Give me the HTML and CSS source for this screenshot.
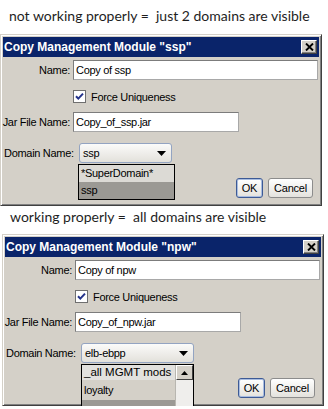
FILE: index.html
```html
<!DOCTYPE html>
<html lang="en">
<head>
    <meta charset="UTF-8">
    <title>Copy Management Module</title>
    <link rel="stylesheet" href="styles.css">
</head>
<body>
    <p class="caption">not working properly =  just 2 domains are visible</p>
    <div class="dialog">
        <div class="titlebar">
            <span class="title">Copy Management Module "ssp"</span>
            <span class="close">
                <svg width="9" height="8" viewBox="0 0 9 8"><path d="M1 0.5 L8 7.5 M8 0.5 L1 7.5" stroke="#000" stroke-width="1.9"/></svg>
            </span>
        </div>
        <div class="dialog-body">
            <div class="row">
                <span class="label">Name:</span>
                <span class="field field-wide">Copy of ssp</span>
            </div>
            <div class="row row-check">
                <span class="checkbox">
                    <svg width="11" height="11" viewBox="0 0 11 11"><path d="M2 5.2 L4.3 7.6 L9 2.6" fill="none" stroke="#23328a" stroke-width="2"/></svg>
                </span>
                <span>Force Uniqueness</span>
            </div>
            <div class="row row-jar">
                <span class="label">Jar File Name:</span>
                <span class="field field-jar">Copy_of_ssp.jar</span>
            </div>
            <div class="row row-domain">
                <span class="domain-label">Domain Name:</span>
                <div class="combo">
                    <span>ssp</span>
                    <svg width="9" height="5" viewBox="0 0 9 5"><polygon points="0,0 9,0 4.5,5" fill="#000"/></svg>
                    <ul class="popup">
                        <li class="item">*SuperDomain*</li>
                        <li class="item item-selected">ssp</li>
                    </ul>
                </div>
            </div>
            <div class="buttons">
                <button class="btn btn-default">OK</button>
                <button class="btn btn-cancel">Cancel</button>
            </div>
        </div>
    </div>

    <p class="caption caption-second">working properly =  all domains are visible</p>
    <div class="dialog dialog-second">
        <div class="titlebar">
            <span class="title">Copy Management Module "npw"</span>
            <span class="close">
                <svg width="9" height="8" viewBox="0 0 9 8"><path d="M1 0.5 L8 7.5 M8 0.5 L1 7.5" stroke="#000" stroke-width="1.9"/></svg>
            </span>
        </div>
        <div class="dialog-body">
            <div class="row">
                <span class="label">Name:</span>
                <span class="field field-wide">Copy of npw</span>
            </div>
            <div class="row row-check">
                <span class="checkbox">
                    <svg width="11" height="11" viewBox="0 0 11 11"><path d="M2 5.2 L4.3 7.6 L9 2.6" fill="none" stroke="#23328a" stroke-width="2"/></svg>
                </span>
                <span>Force Uniqueness</span>
            </div>
            <div class="row row-jar">
                <span class="label">Jar File Name:</span>
                <span class="field field-jar">Copy_of_npw.jar</span>
            </div>
            <div class="row row-domain">
                <span class="domain-label">Domain Name:</span>
                <div class="combo combo-wide">
                    <span>elb-ebpp</span>
                    <svg width="9" height="5" viewBox="0 0 9 5"><polygon points="0,0 9,0 4.5,5" fill="#000"/></svg>
                    <div class="popup popup-scroll">
                        <ul class="popup-list">
                            <li class="item item-big">_all MGMT mods</li>
                            <li class="item item-plain">loyalty</li>
                            <li class="item item-selected">npw</li>
                        </ul>
                        <div class="scrollbar">
                            <span class="scroll-up">
                                <svg width="7" height="4" viewBox="0 0 7 4"><polygon points="0,4 7,4 3.5,0" fill="#000"/></svg>
                            </span>
                        </div>
                    </div>
                </div>
            </div>
            <div class="buttons">
                <button class="btn btn-default">OK</button>
                <button class="btn btn-cancel">Cancel</button>
            </div>
        </div>
    </div>
</body>
</html>
```

FILE: styles.css
```css
:root {
    --face: #d4d0c8;
    --title: #0a246a;
    --shadow: #808080;
    --dark: #404040;
}
html, body {
    margin: 0;
    overflow: hidden;
}
body {
    background: #fff;
    padding-top: 5px;
    font-family: "Liberation Sans", Arial, sans-serif;
    font-size: 11px;
    letter-spacing: -0.3px;
    color: #000;
}
.caption {
    margin: 0;
    padding: 2px 0 9px 9px;
    font-family: Lato, "Open Sans", sans-serif;
    font-size: 14px;
    line-height: 18px;
    letter-spacing: 0;
    color: #1e1e1e;
    white-space: pre;
}
.caption-second {
    padding: 2px 0 8px 10px;
}
.dialog {
    box-sizing: border-box;
    width: 322px;
    background: var(--face);
    border: 1px solid;
    border-color: var(--face) var(--dark) var(--dark) var(--face);
    box-shadow: inset 1px 1px #fff, inset -1px -1px var(--shadow);
    padding: 2px;
}
.dialog-second {
    margin-left: 2px;
}
.titlebar {
    display: flex;
    align-items: center;
    justify-content: space-between;
    height: 20px;
    padding: 0 2px 0 1px;
    background: var(--title);
}
.title {
    color: #fff;
    font-weight: bold;
    font-size: 12px;
    letter-spacing: 0;
}
.close {
    box-sizing: border-box;
    width: 16px;
    height: 14px;
    display: flex;
    align-items: center;
    justify-content: center;
    background: var(--face);
    border: 1px solid;
    border-color: #fff var(--dark) var(--dark) #fff;
    box-shadow: inset -1px -1px var(--shadow);
}
.dialog-body {
    padding: 3px 1px 5px 0;
}
.row {
    display: flex;
    align-items: center;
    height: 20px;
}
.label {
    flex: none;
    width: 67px;
    margin-right: 3px;
    display: flex;
    justify-content: flex-end;
    white-space: nowrap;
}
.field {
    box-sizing: border-box;
    height: 20px;
    display: flex;
    align-items: center;
    padding: 0 2px;
    background: #fff;
    border: 1px solid #7c7c7c;
    border-right-color: #a8a8a8;
    border-bottom-color: #a8a8a8;
}
.field-wide {
    flex: 1;
}
.field-jar {
    width: 166px;
}
.row-check {
    margin-top: 10px;
    height: 13px;
    padding-left: 70px;
}
.checkbox {
    box-sizing: border-box;
    width: 13px;
    height: 13px;
    margin-right: 5px;
    display: flex;
    align-items: center;
    justify-content: center;
    background: #fff;
    border: 1px solid #6f6f6f;
}
.row-jar {
    margin-top: 9px;
}
.row-domain {
    margin-top: 11px;
}
.domain-label {
    flex: none;
    width: 75px;
    padding-left: 1px;
    white-space: nowrap;
}
.combo {
    position: relative;
    box-sizing: border-box;
    width: 93px;
    height: 20px;
    display: flex;
    align-items: center;
    justify-content: space-between;
    padding: 0 5px 0 3px;
    border: 1px solid #93a4c2;
    border-radius: 3px;
    background: linear-gradient(#fbfbfa, #e3e1db);
}
.combo-wide {
    width: 113px;
}
.popup {
    position: absolute;
    left: -2px;
    top: 20px;
    width: 95px;
    margin: 0;
    padding: 0;
    list-style: none;
    background: var(--face);
    border: 1px solid #000;
    z-index: 2;
}
.item {
    height: 17px;
    line-height: 17px;
    padding-left: 2px;
    white-space: nowrap;
    background: #dcdad5;
}
.item-selected {
    background: #9b9994;
}
.popup-scroll {
    left: -1px;
    width: 111px;
    display: flex;
}
.popup-list {
    flex: 1;
    min-width: 0;
    margin: 0;
    padding: 0;
    list-style: none;
    overflow: hidden;
}
.item-big {
    height: 15px;
    line-height: 14px;
    font-size: 11.5px;
    letter-spacing: 0;
    background: #e2e1de;
}
.item-plain {
    height: 20px;
    line-height: 20px;
    background: var(--face);
}
.scrollbar {
    flex: none;
    width: 17px;
    background: #efeeec;
    border-left: 1px solid #b8b6b0;
}
.scroll-up {
    box-sizing: border-box;
    height: 15px;
    display: flex;
    align-items: center;
    justify-content: center;
    background: var(--face);
    border: 1px solid;
    border-color: #fff var(--dark) var(--dark) #fff;
}
.buttons {
    display: flex;
    justify-content: flex-end;
    gap: 5px;
    margin-top: 15px;
    padding-right: 5px;
}
.btn {
    box-sizing: border-box;
    height: 20px;
    padding: 0;
    font-family: inherit;
    font-size: 11px;
    letter-spacing: -0.2px;
    color: #000;
    border: 1px solid #8c8c8c;
    border-radius: 3px;
    background: linear-gradient(#ffffff, #e4e2dd);
}
.btn-default {
    width: 27px;
    border-color: #3d5a95;
    box-shadow: inset 0 0 0 1px #a9bde0;
}
.btn-cancel {
    width: 45px;
}
```
